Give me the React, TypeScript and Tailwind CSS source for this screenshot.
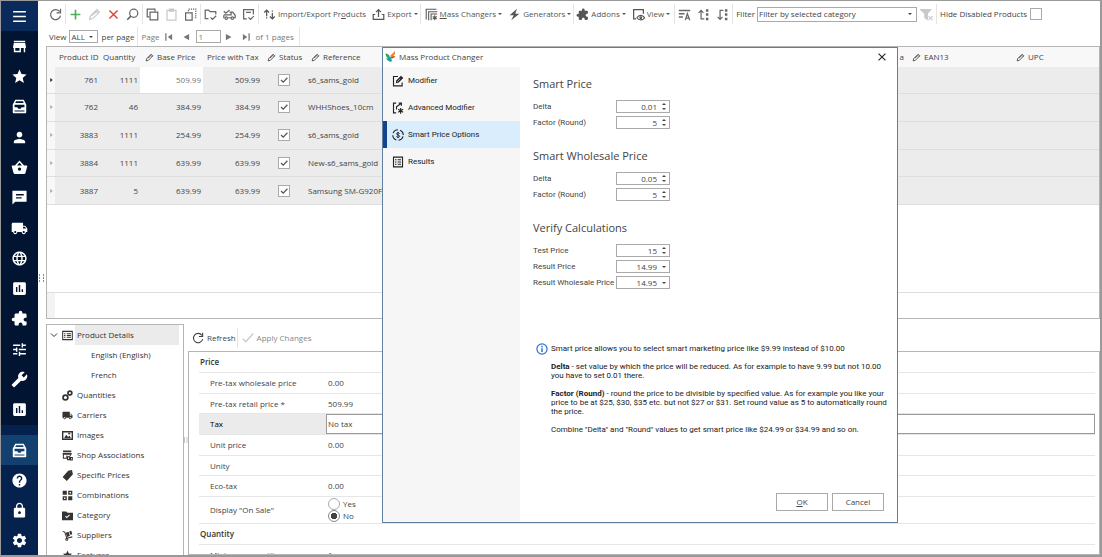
import { useState } from 'react';
import type { ReactNode } from 'react';
import {
  MdBuild,
  MdExtension,
  MdHelp,
  MdInsertChart,
  MdLanguage,
  MdLocalShipping,
  MdLock,
  MdPerson,
  MdSettings,
  MdStar,
  MdStore,
  MdTune,
} from 'react-icons/md';

interface SvgProps {
  className?: string;
  children: ReactNode;
}

// stroke icon on a 16 unit grid
function Line({ className = 'size-[13px]', children }: SvgProps) {
  return (
    <svg viewBox="0 0 16 16" fill="none" stroke="currentColor" strokeWidth="1.5" className={`shrink-0 ${className}`}>
      {children}
    </svg>
  );
}

function Caret() {
  return (
    <svg viewBox="0 0 6 4" className="h-[2px] w-1 shrink-0" fill="currentColor" preserveAspectRatio="none">
      <path d="M0 0h6L3 4z" />
    </svg>
  );
}

function DrawerIcon() {
  return (
    <svg viewBox="0 0 24 24" fill="currentColor">
      <path
        fillRule="evenodd"
        d="M6 2.500h12L21.500 9v11c0 1-.7 1.700-1.700 1.700H4.200c-1 0-1.700-.7-1.700-1.700V9zM7.200 4.500L6 7h12l-1.200-2.500zM5 9.500V13h4c.3 1.400 1.500 2.300 3 2.300s2.700-.9 3-2.300h4V9.500zM5 17.800v1.400h14v-1.400z"
      />
    </svg>
  );
}

function MessageIcon() {
  return (
    <svg viewBox="0 0 24 24" fill="currentColor">
      <path fillRule="evenodd" d="M2 2.500h20V18H6l-4 4zM7 7h11v2H7zm0 4.500h8v2H7z" />
    </svg>
  );
}

function BasketIcon() {
  return (
    <svg viewBox="0 0 24 24" fill="currentColor">
      <path
        fillRule="evenodd"
        d="M12 2l6.500 7H22c.7 0 1.100.5 1 1.200l-2.600 9.600c-.3.800-.9 1.200-1.700 1.200H5.300c-.8 0-1.400-.4-1.700-1.200L1 10.200C.900 9.500 1.300 9 2 9h3.500zm0 3L8.500 9h7zm0 7a2.300 2.300 0 1 0 .1 0z"
      />
    </svg>
  );
}

function RefreshIcon({ className }: { className?: string }) {
  return (
    <Line className={className}>
      <path d="M13.200 4.500A6.200 6.200 0 1 0 14.200 9.500" />
      <path d="M14.200 1v5H9.200" />
    </Line>
  );
}

function PencilIcon({ className }: { className?: string }) {
  return (
    <Line className={className}>
      <path d="M2 14l1-4 8-8 3 3-8 8-4 1zM9.500 3.500l3 3M5 9l5-4" />
    </Line>
  );
}

const UpDown = () => (
  <Line>
    <path d="M4.500 10V2.500M1.500 5.500l3-3 3 3M11.500 6v7.500M8.500 10.500l3 3 3-3M4.500 11.500v1.500M11.500 3v1.500" />
  </Line>
);

const editTools = [
  { label: 'Copy', icon: <Line><path d="M4 11H1.500V1.500H11V4M5 5h9.500v9.500H5z" /></Line> },
  { label: 'Paste', off: true, icon: <Line><path d="M2.500 3h11v12h-11zM5.500 1.500h5V4h-5z" /></Line> },
  {
    label: 'Duplicate',
    icon: <Line><path d="M2 6h8v9H2z" /><path d="M5.500 4V1.500h9V12H12" strokeDasharray="1.500 1.200" /></Line>,
  },
];

const checkTools = [
  {
    label: 'Check folders',
    icon: <Line><path d="M5.500 13H1.500V2.500h4l2 2h7V8M8 11.500l2.500 2.500 4.500-4.500" /></Line>,
  },
  {
    label: 'Check carriers',
    icon: <Line><path d="M1 4l2.500 2.500L8 2.500M8 5h4l3 4v3h-2M1 8.500h9V5M1 9v3h1M6 12h4" /><circle cx="4" cy="12.500" r="1.500" /><circle cx="11.500" cy="12.500" r="1.500" /></Line>,
  },
  { label: 'Check items', icon: <Line><path d="M6 13.500H2V2h12v6M5 5.500h6M8 11.500l2.500 2.500 4-4" /></Line> },
];

const orderTools = [
  {
    label: 'Sort by name',
    icon: <Line><path d="M1 3h14M1 7h7M1 11h5" strokeWidth="2" /><path d="M9 15l2.500-8L14.500 15M10 12.500h4" /></Line>,
  },
  {
    label: 'Move up',
    icon: <Line><path d="M5 14V3M2 6l3-3 3 3M5 13.500h4" /><path d="M11 3h3M11 8h3M11 13.500h3" strokeWidth="3" /></Line>,
  },
  {
    label: 'Move down',
    icon: <Line><path d="M9 3H5v11M2 11l3 3 3-3" /><path d="M11 3h3M11 8h3M11 13.500h3" strokeWidth="3" /></Line>,
  },
];

function Sep() {
  return <span className="h-[20px] w-px shrink-0 bg-[#e4e4e4]" />;
}

interface ToolProps {
  label: string;
  off?: boolean;
  color?: string;
  icon: ReactNode;
}

function Tool({ label, off, color = 'text-[#666]', icon }: ToolProps) {
  return (
    <button
      aria-label={label}
      disabled={off}
      className={`flex h-5 w-[19px] shrink-0 items-center justify-center ${off ? 'text-[#c9c9c9]' : color}`}
    >
      {icon}
    </button>
  );
}

function MenuTool({ icon, caret = true, children }: { icon: ReactNode; caret?: boolean; children: ReactNode }) {
  return (
    <button className="flex h-5 shrink-0 items-center gap-[2px] whitespace-nowrap text-[#555]">
      {icon}
      <span>{children}</span>
      {caret && <Caret />}
    </button>
  );
}

function Toolbar() {
  return (
    <div className="flex h-[26px] shrink-0 items-center pl-2">
      <Tool label="Refresh" icon={<RefreshIcon />} />
      <Sep />
      <Tool label="Add" color="text-[#4cb05a]" icon={<Line><path d="M8 2v12M2 8h12" strokeWidth="2" /></Line>} />
      <Tool label="Edit" off icon={<PencilIcon />} />
      <Tool label="Delete" color="text-[#e0443c]" icon={<Line><path d="M3 3l10 10M13 3L3 13" strokeWidth="1.800" /></Line>} />
      <Tool label="Search" icon={<Line><circle cx="9.500" cy="6.500" r="5" /><path d="M6 10l-4.500 4.500" strokeWidth="2" /></Line>} />
      <Sep />
      {editTools.map((t) => <Tool key={t.label} {...t} />)}
      <Sep />
      {checkTools.map((t) => <Tool key={t.label} {...t} />)}
      <Sep />
      <div className="flex items-center gap-[6px] pl-1 pr-[2px]">
        <MenuTool icon={<UpDown />} caret={false}>Import/Export Pr<u>o</u>ducts</MenuTool>
        <MenuTool icon={<Line><path d="M4 8H1.500v6h13V8H12M8 11V2M5 5l3-3 3 3" /></Line>}>Export</MenuTool>
      </div>
      <Sep />
      <div className="flex items-center gap-[6px] pl-1 pr-[2px]">
        <MenuTool
          icon={
            <Line>
              <path d="M1.500 14V1.500H14M4.500 15V4.500H15M7.500 15V7.500H15M12 9v6M9.500 10.500l5 3M14.500 10.500l-5 3" strokeWidth="1.300" />
            </Line>
          }
        >
          <u>M</u>ass Changers
        </MenuTool>
        <MenuTool icon={<Line><path d="M11 1L2 9h5l-3 6 10-8H9z" fill="currentColor" stroke="none" /></Line>}>
          Generators
        </MenuTool>
      </div>
      <Sep />
      <div className="flex items-center gap-[6px] pl-[2px] pr-1">
        <MenuTool icon={<MdExtension className="size-[13px] shrink-0 -scale-x-100" />}>Addons</MenuTool>
        <MenuTool
          icon={
            <Line>
              <path d="M5 13.500H2V2h12v5" />
              <path d="M6 12c2.500-4 7-4 9.500 0-2.500 3.500-7 3.500-9.500 0z" />
              <circle cx="10.800" cy="12" r="1" />
            </Line>
          }
        >
          View
        </MenuTool>
      </div>
      <Sep />
      {orderTools.map((t) => <Tool key={t.label} {...t} />)}
      <Sep />
      <label htmlFor="filter" className="pl-[3px] pr-[2px]">Filter</label>
      <div className="flex h-[15px] w-[160px] shrink-0 items-center border border-[#aaa] pr-1">
        <select id="filter" className="h-full flex-1 appearance-none pl-px outline-none">
          <option>Filter by selected category</option>
        </select>
        <Caret />
      </div>
      <Tool
        label="Clear filter"
        off
        icon={<Line><path d="M1 2h12L9 7v7l-3-2V7z" fill="currentColor" /><path d="M10.500 10l5 5M15.500 10l-5 5" /></Line>}
      />
      <Sep />
      <label className="flex items-center gap-[3px] whitespace-nowrap pl-[3px]">
        Hide Disabled Products
        <input type="checkbox" className="size-3 appearance-none border border-[#aaa]" />
      </label>
    </div>
  );
}

const pagerPaths = {
  first: 'M2 2h2v12H2zM13 3v10L6 8z',
  prev: 'M13 3v10L4 8z',
  next: 'M3 3v10l9-5z',
  last: 'M3 3v10l7-5zM12 2h2v12h-2z',
};

function PagerButton({ label, d }: { label: string; d: string }) {
  return (
    <button aria-label={label} className="flex w-[17px] justify-center text-[#777]">
      <svg viewBox="0 0 16 16" fill="currentColor" className="size-[10px]">
        <path d={d} />
      </svg>
    </button>
  );
}

function Pager() {
  return (
    <div className="flex h-[19px] shrink-0 items-center pl-[11px]">
      <label htmlFor="per-page">View</label>
      <div className="ml-[3px] flex h-[13px] w-[29px] items-center border border-[#aaa] pr-1">
        <select id="per-page" className="h-full w-4 flex-1 appearance-none pl-px outline-none">
          <option>ALL</option>
        </select>
        <Caret />
      </div>
      <span className="px-[3px]">per page</span>
      <Sep />
      <label htmlFor="page" className="pl-[3px] pr-px text-[#777]">Page</label>
      <PagerButton label="First page" d={pagerPaths.first} />
      <PagerButton label="Previous page" d={pagerPaths.prev} />
      <input id="page" defaultValue="1" className="ml-px h-[13px] w-[25px] border border-[#aaa] px-[2px] text-[#777] outline-none" />
      <PagerButton label="Next page" d={pagerPaths.next} />
      <PagerButton label="Last page" d={pagerPaths.last} />
      <span className="pl-px pr-[5px] text-[#777]">of 1 pages</span>
      <Sep />
    </div>
  );
}

const navTop = [
  { label: 'Store', icon: <MdStore /> },
  { label: 'Favorites', icon: <MdStar /> },
  { label: 'Catalog', icon: <DrawerIcon /> },
  { label: 'Customers', icon: <MdPerson /> },
  { label: 'Orders', icon: <BasketIcon /> },
  { label: 'Messages', icon: <MessageIcon /> },
  { label: 'Shipping', icon: <MdLocalShipping /> },
  { label: 'Localization', icon: <MdLanguage /> },
  { label: 'Statistics', icon: <MdInsertChart /> },
  { label: 'Modules', icon: <MdExtension className="-scale-x-100" /> },
  { label: 'Preferences', icon: <MdTune /> },
  { label: 'Tools', icon: <MdBuild className="-scale-x-100" /> },
  { label: 'Reports', icon: <MdInsertChart /> },
];

const navBottom = [
  { label: 'Products', icon: <DrawerIcon />, active: true },
  { label: 'Help', icon: <MdHelp /> },
  { label: 'Lock', icon: <MdLock /> },
  { label: 'Settings', icon: <MdSettings /> },
];

function Sidebar() {
  return (
    <nav className="flex w-[37px] shrink-0 flex-col bg-[#011533] text-white [&_svg]:size-[17px]">
      <button aria-label="Menu" className="flex h-[30px] shrink-0 items-center justify-center bg-[#0a2a5c]">
        <svg viewBox="0 0 16 16" stroke="currentColor" strokeWidth="1.500">
          <path d="M2 3.500h12M2 8h12M2 12.500h12" />
        </svg>
      </button>
      <div className="flex min-h-0 flex-1 flex-col">
        {navTop.map((n) => (
          <button key={n.label} aria-label={n.label} className="flex min-h-0 flex-1 items-center justify-center">
            {n.icon}
          </button>
        ))}
      </div>
      <div className="flex h-[130px] shrink-0 flex-col bg-[#05224e] pt-[10px]">
        {navBottom.map((n) => (
          <button
            key={n.label}
            aria-label={n.label}
            className={`flex h-[30px] shrink-0 items-center justify-center ${n.active ? 'bg-[#12406f]' : ''}`}
          >
            {n.icon}
          </button>
        ))}
      </div>
    </nav>
  );
}

const products = [
  { id: '761', qty: '1111', price: '509.99', ref: 's6_sams_gold' },
  { id: '762', qty: '46', price: '384.99', ref: 'WHHShoes_10cm' },
  { id: '3883', qty: '1111', price: '254.99', ref: 's6_sams_gold' },
  { id: '3884', qty: '1111', price: '639.99', ref: 'New-s6_sams_gold' },
  { id: '3887', qty: '5', price: '639.99', ref: 'Samsung SM-G920F' },
];

function EditHead({ children }: { children: ReactNode }) {
  return (
    <span className="flex items-center gap-[3px] whitespace-nowrap">
      <PencilIcon className="size-[9px]" />
      {children}
    </span>
  );
}

function ProductGrid() {
  return (
    <section className="flex h-[273px] shrink-0 flex-col border border-[#b5b5b5]">
      <table className="h-[158px] w-full table-fixed border-collapse">
        <colgroup>
          <col className="w-[8px]" />
          <col className="w-[46px]" />
          <col className="w-[39px]" />
          <col className="w-[63px]" />
          <col className="w-[60px]" />
          <col className="w-[44px]" />
          <col />
          <col className="w-[104px]" />
          <col className="w-[87px]" />
        </colgroup>
        <thead>
          <tr className="h-5 bg-[#f8f8f8] text-left [&>th]:font-normal">
            <th />
            <th className="overflow-hidden whitespace-nowrap pl-1">Product ID</th>
            <th className="pl-[2px]">Quantity</th>
            <th className="pl-[5px]"><EditHead>Base Price</EditHead></th>
            <th className="whitespace-nowrap pl-1">Price with Tax</th>
            <th className="pl-1"><EditHead>Status</EditHead></th>
            <th className="pl-1">
              <span className="flex justify-between pr-1">
                <EditHead>Reference</EditHead>
                <span>a</span>
              </span>
            </th>
            <th className="pl-1"><EditHead>EAN13</EditHead></th>
            <th className="pl-1"><EditHead>UPC</EditHead></th>
          </tr>
        </thead>
        <tbody>
          {products.map((p, i) => (
            <tr key={p.id} className="border-b border-[#dedede] bg-[#ececec] text-right">
              <td className={`bg-[#f8f8f8] text-center ${i === 0 ? 'text-[#333]' : 'text-[#aaa]'}`}>
                <svg viewBox="0 0 4 6" fill="currentColor" className="mx-auto h-1 w-[3px]">
                  <path d="M0 0l4 3-4 3z" />
                </svg>
              </td>
              <td className="pr-[3px]">{p.id}</td>
              <td className="pr-[2px]">{p.qty}</td>
              <td className={`pr-[2px] ${i === 0 ? 'bg-white text-[#777]' : ''}`}>{p.price}</td>
              <td className="pr-[3px]">{p.price}</td>
              <td className="pr-[17px]">
                <label className="relative ml-auto block size-3">
                  <input
                    type="checkbox"
                    aria-label={`Status of ${p.id}`}
                    defaultChecked
                    className="block size-3 appearance-none border border-[#aaa] bg-white"
                  />
                  <svg viewBox="0 0 16 16" fill="none" stroke="#555" strokeWidth="1.600" className="pointer-events-none absolute inset-0 size-3">
                    <path d="M4 8l3 3 5.500-6" />
                  </svg>
                </label>
              </td>
              <td className="pl-px text-left">{p.ref}</td>
              <td />
              <td />
            </tr>
          ))}
        </tbody>
      </table>
      <div className="flex-1" />
      <div className="h-[26px] border-t border-[#dedede]">
        <div className="h-full w-2 bg-[#f3f3f3]" />
      </div>
    </section>
  );
}

const treeItems = [
  {
    label: 'Quantities',
    icon: <Line><circle cx="5" cy="11" r="3.500" strokeWidth="2.500" /><circle cx="11.500" cy="4.500" r="2.800" strokeWidth="2.500" /></Line>,
  },
  { label: 'Carriers', icon: <MdLocalShipping className="size-[13px]" /> },
  {
    label: 'Images',
    icon: <Line><path d="M1 2.500h14v11H1z" strokeWidth="2" /><path d="M3 12l3-5 3 3 2-2 2 4zM9 4h3v2H9z" fill="currentColor" stroke="none" /></Line>,
  },
  {
    label: 'Shop Associations',
    icon: <Line><path d="M1.500 2h12M1 5.500h13" strokeWidth="2.500" /><path d="M2 6v6h5V8M12 7v2M8 10h3v4H8zM12.500 11h2.500v3.500h-2.500z" /></Line>,
  },
  {
    label: 'Specific Prices',
    icon: <Line><path fillRule="evenodd" d="M9 2l5-1 1 5-8 9-5-5zM12 3a1 1 0 1 0 .1 0z" fill="currentColor" /></Line>,
  },
  {
    label: 'Combinations',
    icon: <Line><path d="M1 1h6v6H1zM9 9h6v6H9z" fill="currentColor" stroke="none" /><path d="M10 2h4v4h-4zM2 10h4v4H2z" strokeWidth="2" /></Line>,
  },
  {
    label: 'Category',
    icon: <Line><path d="M0 2h6l2 2h8v11H0z" fill="currentColor" stroke="none" /><path d="M5 9l2 2 4-4" stroke="white" /></Line>,
  },
  {
    label: 'Suppliers',
    icon: <Line><path d="M1 2l3 1 3 9 8-2" /><circle cx="7" cy="13.500" r="1.500" /><path d="M5.500 4l4-1.500 2 6-4 1.500zM10.500 2l3-1 1.500 5-3 1z" fill="currentColor" stroke="none" /></Line>,
  },
  { label: 'Features', icon: <MdStar className="size-[14px]" /> },
];

function DetailsTree() {
  return (
    <aside className="w-[138px] shrink-0 overflow-hidden border border-b-0 border-[#b5b5b5] pr-1 leading-5 text-[#333]">
      <div className="flex h-5 items-center pl-[3px]">
        <Line className="size-[8px]"><path d="M2 5l6 6 6-6" strokeWidth="2" /></Line>
        <Line className="ml-1 size-[11px]"><path d="M1 2h14v12H1zM3 5.500h2M3 8h2M3 10.500h2M7 5.500h6M7 8h6M7 10.500h6" /></Line>
        <button className="ml-[2px] h-full flex-1 bg-[#ebebeb] pl-[2px] text-left">Product Details</button>
      </div>
      <button className="block h-5 w-full pl-11 text-left">English (English)</button>
      <button className="block h-5 w-full pl-11 text-left">French</button>
      {treeItems.map((t) => (
        <button key={t.label} className="flex h-5 w-full items-center gap-1 pl-[15px] text-[#333] [&>svg]:w-[11px] [&>svg]:shrink-0">
          {t.icon}
          {t.label}
        </button>
      ))}
    </aside>
  );
}

const priceFields = [
  { label: 'Pre-tax wholesale price', value: '0.00' },
  { label: 'Pre-tax retail price *', value: '509.99' },
  { label: 'Tax', value: 'No tax', selected: true },
  { label: 'Unit price', value: '0.00' },
  { label: 'Unity', value: '' },
  { label: 'Eco-tax', value: '0.00' },
];

const radioClass =
  'size-3 appearance-none rounded-full border border-[#aaa] bg-white checked:border-[#888] checked:bg-[radial-gradient(circle,#444_0_3px,white_3px)]';

function ProductForm() {
  return (
    <section className="flex min-w-0 flex-1 flex-col">
      <div className="flex h-[27px] shrink-0 items-center pl-1">
        <button className="flex items-center gap-[3px] pr-px">
          <RefreshIcon className="size-[12px]" />
          Refresh
        </button>
        <Sep />
        <button disabled className="flex items-center gap-[3px] pl-1 text-[#888]">
          <Line className="size-[12px] text-[#ccc]"><path d="M1 9l4 4L15 2" strokeWidth="2" /></Line>
          Apply Changes
        </button>
      </div>
      <div className="min-h-0 flex-1 overflow-hidden border border-[#b5b5b5] pl-[10px] pr-1">
        <h3 className="flex h-[21px] items-center border-b border-[#e6e6e6] pl-px font-semibold text-[#333]">Price</h3>
        <div className="flex h-[124px] flex-col">
          {priceFields.map((f) => (
            <div key={f.label} className="flex min-h-0 flex-1 border-b border-[#e6e6e6]">
              <label
                htmlFor={f.label}
                className={`flex w-[127px] shrink-0 items-center pl-[11px] ${f.selected ? 'bg-[#ebebeb] text-black' : ''}`}
              >
                {f.label}
              </label>
              {f.selected ? (
                <select id={f.label} className="w-full appearance-none border border-[#999] pl-px outline-none">
                  <option>{f.value}</option>
                </select>
              ) : (
                <input id={f.label} defaultValue={f.value} className="w-full pl-[2px] outline-none" />
              )}
            </div>
          ))}
        </div>
        <fieldset className="flex h-[27px] items-center border-b border-[#e6e6e6]">
          <span className="w-[127px] pl-[11px]">Display "On Sale"</span>
          <div className="flex flex-col pl-[2px] leading-3">
            <label className="flex items-center gap-[3px]">
              <input type="radio" name="sale" className={radioClass} />
              Yes
            </label>
            <label className="flex items-center gap-[3px]">
              <input type="radio" name="sale" defaultChecked className={radioClass} />
              No
            </label>
          </div>
        </fieldset>
        <h3 className="flex h-[21px] items-center border-b border-[#e6e6e6] pl-px font-semibold text-[#333]">Quantity</h3>
        <div className="flex h-5 items-center">
          <label htmlFor="min-qty" className="w-[127px] pl-[11px]">Minimum quantity</label>
          <input id="min-qty" defaultValue="1" className="pl-[2px] outline-none" />
        </div>
      </div>
    </section>
  );
}

const dialogTabs = [
  {
    label: 'Modifier',
    icon: (
      <>
        <path d="M8 2H2v12.500h11.500V10" />
        <path d="M5 11l1-4L12 1l3 3-6 6z" fill="currentColor" stroke="none" />
        <path d="M7 9l4-4" stroke="white" strokeWidth="0.800" />
      </>
    ),
  },
  {
    label: 'Advanced Modifier',
    icon: (
      <>
        <path d="M5.500 1.500H2v13h3.500M6 10V6.500L12 2M9 1.500h3.500V5" />
        <path d="M11.500 8v7.500M8.300 9.800l6.400 3.900M14.700 9.800l-6.400 3.900" />
      </>
    ),
  },
  {
    label: 'Smart Price Options',
    icon: (
      <>
        <circle cx="8" cy="8" r="7" strokeDasharray="8 3" strokeDashoffset="-2" />
        <path d="M10.300 6.200c-.5-1.600-4.300-1.500-4.300.3s4.300 1.300 4.300 3.200-3.900 1.900-4.500.2M8 3.800v8.400" strokeWidth="1.200" />
      </>
    ),
  },
  {
    label: 'Results',
    icon: <path d="M2 1.500h12v13H2zM4 5h2M4 8h2M4 11h2M7.500 5H12M7.500 8H12M7.500 11H12" />,
  },
];

interface Field {
  label: string;
  value: string;
  list?: boolean;
}

const sections: { title: string; fields: Field[] }[] = [
  { title: 'Smart Price', fields: [{ label: 'Delta', value: '0.01' }, { label: 'Factor (Round)', value: '5' }] },
  { title: 'Smart Wholesale Price', fields: [{ label: 'Delta', value: '0.05' }, { label: 'Factor (Round)', value: '5' }] },
  {
    title: 'Verify Calculations',
    fields: [
      { label: 'Test Price', value: '15' },
      { label: 'Result Price', value: '14.99', list: true },
      { label: 'Result Wholesale Price', value: '14.95', list: true },
    ],
  },
];

function NumberField({ id, label, value, list }: Field & { id: string }) {
  return (
    <div className="flex h-[13px] items-center">
      <label htmlFor={id} className="w-[83px] whitespace-nowrap font-['Roboto',sans-serif]">{label}</label>
      <div className="flex h-full w-[54px] items-center border border-[#aaa] bg-white">
        {list ? (
          <>
            <select id={id} className="h-full min-w-0 flex-1 appearance-none pr-px outline-none [text-align-last:right]">
              <option>{value}</option>
            </select>
            <span className="flex w-[11px] justify-center"><Caret /></span>
          </>
        ) : (
          <>
            <input id={id} defaultValue={value} className="h-full min-w-0 flex-1 pr-px text-right outline-none" />
            <span className="flex w-[11px] flex-col items-center gap-[3px]">
              <button aria-label={`Increase ${label}`} className="rotate-180"><Caret /></button>
              <button aria-label={`Decrease ${label}`}><Caret /></button>
            </span>
          </>
        )}
      </div>
    </div>
  );
}

function MassChangerDialog() {
  const [tab, setTab] = useState('Smart Price Options');

  return (
    <div role="dialog" aria-label="Mass Product Changer" className="absolute left-[381px] top-[46px] flex h-[476px] w-[516px] flex-col border border-[#5f7f9f] bg-white">
      <header className="flex h-[19px] shrink-0 items-center pb-[2px] pl-[2px] pr-[10px]">
        <svg viewBox="0 0 20 22" className="size-[11px]">
          <path d="M9 10L19 0c1 5-1 9-5 11z" fill="#f58220" />
          <path d="M10 11l9-1c0 3-3 5-7 5z" fill="#d8452b" />
          <path d="M0 5c4 0 8 3 9 8l-2 3C3 14 0 10 0 5z" fill="#2ba84a" />
          <path d="M1 15c4-1 7-1 10-4l2 10c-5 1-9-1-12-6z" fill="#1ba7a0" />
        </svg>
        <h1 className="flex-1 pl-[3px]">Mass Product Changer</h1>
        <button aria-label="Close" className="text-[#222]">
          <Line className="size-[10px]"><path d="M2.500 2.500l11 11M13.500 2.500l-11 11" strokeWidth="1.800" /></Line>
        </button>
      </header>
      <div className="flex min-h-0 flex-1">
        <div className="w-[137px] shrink-0 bg-[#f6f6f6] font-['Roboto',sans-serif] text-[#222]">
          {dialogTabs.map((t) => (
            <button
              key={t.label}
              onClick={() => setTab(t.label)}
              className={`flex h-[27px] w-full items-center gap-1 border-l-4 pl-[5px] ${
                tab === t.label ? 'border-[#11438f] bg-[#d9edfd]' : 'border-transparent'
              }`}
            >
              <Line className="size-[12px]">{t.icon}</Line>
              {t.label}
            </button>
          ))}
        </div>
        <div className="flex min-w-0 flex-1 flex-col pb-[11px] pl-[13px] pr-[13px] pt-2">
          <div className="flex flex-col gap-[18px]">
            {sections.map((s) => (
              <section key={s.title} className="flex flex-col gap-[3px]">
                <h2 className="pb-1 text-[11px] leading-[18px] text-[#444]">{s.title}</h2>
                {s.fields.map((f) => (
                  <NumberField key={f.label} id={`${s.title} ${f.label}`} {...f} />
                ))}
              </section>
            ))}
          </div>
          <div className="mt-[54px] flex gap-[3px] whitespace-nowrap pl-[3px] font-['Roboto',sans-serif] leading-[9px] text-[#222]">
            <svg viewBox="0 0 16 16" fill="none" stroke="#2a6fd0" className="size-[12px] shrink-0">
              <circle cx="8" cy="8" r="6.800" strokeWidth="1.600" />
              <path d="M8 7v5M8 3.800v2" strokeWidth="2" />
            </svg>
            <div className="flex flex-col gap-[9px] pt-px">
              <p>Smart price allows you to select smart marketing price like $9.99 instead of $10.00</p>
              <p>
                <b>Delta</b> - set value by which the price will be reduced. As for example to have 9.99 but not 10.00
                <br />
                you have to set 0.01 there.
              </p>
              <p>
                <b>Factor (Round)</b> - round the price to be divisible by specified value. As for example you like your
                <br />
                price to be at $25, $30, $35 etc. but not $27 or $31. Set round value as 5 to automatically round
                <br />
                the price.
              </p>
              <p>Combine "Delta" and "Round" values to get smart price like $24.99 or $34.99 and so on.</p>
            </div>
          </div>
          <footer className="mt-auto flex justify-end gap-1">
            <button className="h-[18px] w-[52px] border border-[#aaa]"><u>O</u>K</button>
            <button className="h-[18px] w-[52px] border border-[#aaa]">Cancel</button>
          </footer>
        </div>
      </div>
    </div>
  );
}

function Grip() {
  return (
    <svg viewBox="0 0 6 8" fill="#888" className="h-2 w-[6px]">
      <path d="M0 0h1v2H0zM0 3h1v2H0zM0 6h1v2H0zM4 0h1v2H4zM4 3h1v2H4zM4 6h1v2H4z" />
    </svg>
  );
}

export default function App() {
  return (
    <div className="relative flex h-screen overflow-hidden border border-b-2 border-r-2 border-[#999] bg-white font-['Open_Sans',sans-serif] text-[8px] leading-[12px] text-[#444]">
      <Sidebar />
      <div className="flex min-w-0 flex-1 flex-col">
        <Toolbar />
        <Pager />
        <div className="flex min-h-0 flex-1">
          <div className="flex w-2 shrink-0 items-center justify-center pb-[46px]">
            <Grip />
          </div>
          <div className="flex min-w-0 flex-1 flex-col gap-[5px]">
            <ProductGrid />
            <div className="flex min-h-0 flex-1">
              <DetailsTree />
              <div className="flex w-[4px] shrink-0 items-center justify-center overflow-hidden">
                <Grip />
              </div>
              <ProductForm />
            </div>
          </div>
        </div>
      </div>
      <MassChangerDialog />
    </div>
  );
}
